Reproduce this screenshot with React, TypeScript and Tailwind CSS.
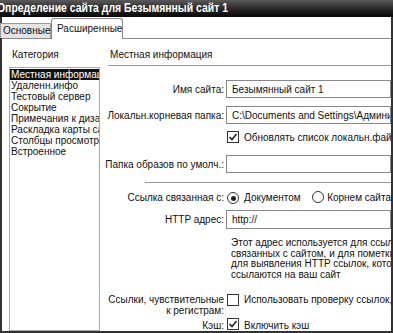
import React from "react";

const font = { fontFamily: '"Liberation Sans", Arial, sans-serif' };

const Check = ({ checked }: { checked: boolean }) => (
  <span className="inline-flex h-[12px] w-[12px] shrink-0 items-center justify-center border border-[#333] bg-white">
    {checked && (
      <svg width="10" height="10" viewBox="0 0 10 10">
        <path d="M1.5 5 L4 7.5 L8.5 2" fill="none" stroke="#222" strokeWidth="1.6" />
      </svg>
    )}
  </span>
);

const Radio = ({ checked }: { checked: boolean }) => (
  <span className="inline-flex h-[12px] w-[12px] shrink-0 items-center justify-center rounded-full border border-[#333] bg-white">
    {checked && <span className="h-[5px] w-[5px] rounded-full bg-[#222]" />}
  </span>
);

const categories = [
  "Местная информация",
  "Удаленн.инфо",
  "Тестовый сервер",
  "Сокрытие",
  "Примечания к дизайну",
  "Раскладка карты сайта",
  "Столбцы просмотра файлов",
  "Встроенное",
];

export default function App() {
  return (
    <div className="flex h-[333px] w-[393px] flex-col overflow-hidden bg-white text-[10px] text-[#111]" style={font}>
      {/* заголовок окна */}
      <div className="h-[17px] shrink-0 overflow-hidden whitespace-nowrap bg-gradient-to-b from-[#5a5a5a] via-[#2a2a2a] to-[#080808] text-[12px] font-bold leading-[17px] text-white">
        <span className="ml-[-3px] inline-block origin-left scale-x-[0.87]">Определение сайта для Безымянный сайт 1</span>
      </div>

      <div className="flex min-h-0 flex-1 flex-col border-x-2 border-b-2 border-[#333]">
        {/* вкладки */}
        <div className="flex h-[22px] shrink-0 items-end border-b border-[#8a8a8a]">
          <div className="ml-[-2px] flex h-[15px] w-[51px] items-center border border-b-0 border-[#9a9a9a] bg-[#e4e4e4] pl-[2px] leading-none">
            Основные
          </div>
          <div className="mb-[-1px] flex h-[21px] w-[72px] items-center rounded-t-[3px] border border-b-0 border-[#8a8a8a] bg-white pl-[5px] leading-none">
            Расширенные
          </div>
        </div>

        <div className="flex min-h-0 flex-1">
          {/* категории */}
          <div className="flex w-[98px] shrink-0 flex-col">
            <div className="h-[28px] pl-[10px] pt-[10px] leading-[12px]">Категория</div>
            <div className="ml-[7px] flex-1 overflow-hidden border border-[#aaa] pt-[1px]">
              {categories.map((c, i) => (
                <div
                  key={c}
                  className={
                    "h-[11px] overflow-hidden whitespace-nowrap pl-[1px] leading-[11px] " +
                    (i === 0 ? "bg-[#111] text-white" : "")
                  }
                >
                  {c}
                </div>
              ))}
            </div>
          </div>

          {/* форма */}
          <div className="flex min-w-0 flex-1 flex-col overflow-hidden">
            <div className="h-[26px] whitespace-nowrap pl-[10px] pt-[9px] leading-[13px]">Местная информация</div>
            <div className="ml-[8px] h-px shrink-0 bg-[#999]" />

            <div className="mt-[14px] flex h-[18px] items-center">
              <div className="w-[124px] shrink-0 text-right">Имя сайта:</div>
              <div className="ml-[2px] flex h-full flex-1 items-center whitespace-nowrap border border-[#888] pl-[5px]">Безымянный сайт 1</div>
            </div>

            <div className="mt-[8px] flex h-[18px] items-center">
              <div className="w-[124px] shrink-0 whitespace-nowrap text-right">Локальн.корневая папка:</div>
              <div className="ml-[2px] flex h-full flex-1 items-center overflow-hidden whitespace-nowrap border border-[#888] pl-[5px]">
                C:\Documents and Settings\Администратор\
              </div>
            </div>

            <div className="mt-[7px] flex h-[12px] items-center pl-[127px]">
              <Check checked />
              <span className="ml-[5px] whitespace-nowrap">Обновлять список локальн.файлов автоматически</span>
            </div>

            <div className="mt-[12px] flex h-[18px] items-center">
              <div className="w-[124px] shrink-0 whitespace-nowrap text-right">Папка образов по умолч.:</div>
              <div className="ml-[2px] h-full flex-1 border border-[#888]" />
            </div>

            <div className="ml-[45px] mt-[9px] h-px shrink-0 bg-[#999]" />

            <div className="mt-[8px] flex h-[12px] items-center">
              <div className="w-[124px] shrink-0 whitespace-nowrap text-right">Ссылка связанная с:</div>
              <span className="ml-[3px]"><Radio checked /></span>
              <span className="ml-[5px] w-[87px] whitespace-nowrap">Документом</span>
              <Radio checked={false} />
              <span className="ml-[3px] whitespace-nowrap">Корнем сайта</span>
            </div>

            <div className="mt-[7px] flex h-[19px] items-center">
              <div className="w-[124px] shrink-0 text-right">HTTP адрес:</div>
              <div className="ml-[2px] flex h-full flex-1 items-center whitespace-nowrap border border-[#888] pl-[5px]">http://</div>
            </div>

            <div className="ml-[131px] mt-[9px] whitespace-nowrap leading-[10.5px]">
              <div>Этот адрес используется для ссылок,</div>
              <div>связанных с сайтом, и для пометки ссылок</div>
              <div>для выявления HTTP ссылок, которые</div>
              <div>ссылаются на ваш сайт</div>
            </div>

            <div className="mt-[15px] flex">
              <div className="w-[124px] shrink-0 whitespace-nowrap text-right leading-[10.5px]">
                Ссылки, чувствительные
                <br />к регистрам:
              </div>
              <span className="ml-[3px] mt-[-1px]"><Check checked={false} /></span>
              <span className="ml-[5px] whitespace-nowrap leading-[10.5px]">Использовать проверку ссылок, чувствительную к регистру</span>
            </div>

            <div className="mt-[3px] flex h-[12px] items-center">
              <div className="w-[124px] shrink-0 text-right">Кэш:</div>
              <span className="ml-[3px]"><Check checked /></span>
              <span className="ml-[5px] whitespace-nowrap">Включить кэш</span>
            </div>
          </div>
        </div>
      </div>
    </div>
  );
}
